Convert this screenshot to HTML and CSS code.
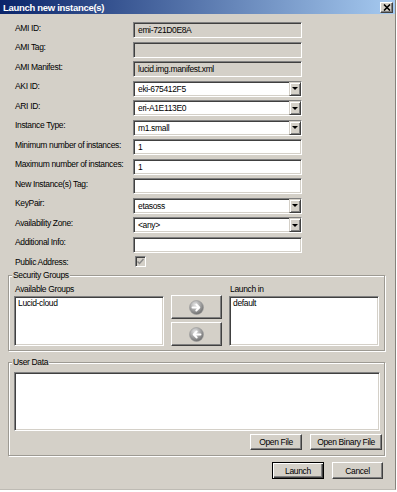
FILE: index.html
```html
<!DOCTYPE html>
<html lang="en">
<head>
    <meta charset="UTF-8">
    <title>Launch new instance(s)</title>
    <link rel="stylesheet" href="styles.css">
</head>
<body>
<div class="window">
    <div class="titlebar">
        <span class="title">Launch new instance(s)</span>
        <div class="close">
            <svg width="8" height="7" viewBox="0 0 8 7"><path d="M1 0.5l6 6M7 0.5l-6 6" stroke="#000" stroke-width="1.6"/></svg>
        </div>
    </div>

    <!-- instance settings -->
    <div class="form">
        <div class="label">AMI ID:</div>
        <div class="field disabled">emi-721D0E8A</div>

        <div class="label">AMI Tag:</div>
        <div class="field disabled"></div>

        <div class="label">AMI Manifest:</div>
        <div class="field disabled">lucid.img.manifest.xml</div>

        <div class="label">AKI ID:</div>
        <div class="field select"><span class="value">eki-675412F5</span><span class="drop"><i></i></span></div>

        <div class="label">ARI ID:</div>
        <div class="field select"><span class="value">eri-A1E113E0</span><span class="drop"><i></i></span></div>

        <div class="label">Instance Type:</div>
        <div class="field select"><span class="value">m1.small</span><span class="drop"><i></i></span></div>

        <div class="label">Minimum number of instances:</div>
        <div class="field">1</div>

        <div class="label">Maximum number of instances:</div>
        <div class="field">1</div>

        <div class="label">New Instance(s) Tag:</div>
        <div class="field"></div>

        <div class="label">KeyPair:</div>
        <div class="field select"><span class="value">etasoss</span><span class="drop"><i></i></span></div>

        <div class="label">Availability Zone:</div>
        <div class="field select"><span class="value">&lt;any&gt;</span><span class="drop"><i></i></span></div>

        <div class="label">Additional Info:</div>
        <div class="field"></div>

        <div class="label">Public Address:</div>
        <div class="check">
            <svg width="7" height="7" viewBox="0 0 7 7"><path d="M0.5 3.5l2 2 4-4.5" stroke="#8a8a8a" stroke-width="1.5" fill="none"/></svg>
        </div>
    </div>

    <!-- security groups -->
    <fieldset class="group security">
        <legend>Security Groups</legend>
        <div class="sg">
            <div class="sg-label">Available Groups</div>
            <div></div>
            <div class="sg-label">Launch in</div>

            <div class="list">Lucid-cloud</div>
            <div class="movers">
                <div class="btn mover">
                    <svg width="15" height="15" viewBox="0 0 15 15">
                        <defs><radialGradient id="ga" cx="40%" cy="30%" r="75%"><stop offset="0" stop-color="#e6e6e6"/><stop offset="1" stop-color="#666"/></radialGradient></defs>
                        <circle cx="7.5" cy="7.5" r="7" fill="url(#ga)" stroke="#9a9a9a" stroke-width="0.6"/>
                        <path d="M3.5 7.5h6.5M7.3 4.5l3 3-3 3" stroke="#fff" stroke-width="1.9" fill="none" stroke-linecap="round" stroke-linejoin="round"/>
                    </svg>
                </div>
                <div class="btn mover">
                    <svg width="15" height="15" viewBox="0 0 15 15">
                        <defs><radialGradient id="gb" cx="40%" cy="30%" r="75%"><stop offset="0" stop-color="#e6e6e6"/><stop offset="1" stop-color="#666"/></radialGradient></defs>
                        <circle cx="7.5" cy="7.5" r="7" fill="url(#gb)" stroke="#9a9a9a" stroke-width="0.6"/>
                        <path d="M11.5 7.5h-6.5M7.7 4.5l-3 3 3 3" stroke="#fff" stroke-width="1.9" fill="none" stroke-linecap="round" stroke-linejoin="round"/>
                    </svg>
                </div>
            </div>
            <div class="list">default</div>
        </div>
    </fieldset>

    <!-- user data -->
    <fieldset class="group userdata">
        <legend>User Data</legend>
        <div class="textarea"></div>
        <div class="file-buttons">
            <div class="btn open-file">Open File</div>
            <div class="btn open-binary">Open Binary File</div>
        </div>
    </fieldset>

    <div class="actions">
        <div class="btn default launch">Launch</div>
        <div class="btn cancel">Cancel</div>
    </div>
</div>
</body>
</html>
```

FILE: styles.css
```css
* {
    box-sizing: border-box;
}
body {
    margin: 0;
    background: #fff;
    font-family: "Liberation Sans", Arial, sans-serif;
    font-size: 8.5px;
    letter-spacing: -0.35px;
    color: #000;
}
.window {
    width: 396px;
    height: 490px;
    background: #d4d0c8;
    border-right: 1px solid #86837c;
    border-bottom: 1px solid #bebbb4;
}
.titlebar {
    height: 14px;
    display: flex;
    align-items: center;
    justify-content: space-between;
    padding: 0 2px 0 3px;
    background: linear-gradient(to right, #0a246a, #a6caf0);
}
.title {
    color: #fff;
    font-weight: bold;
    font-size: 9.5px;
    letter-spacing: -0.3px;
}
.close {
    width: 13px;
    height: 11px;
    display: flex;
    align-items: center;
    justify-content: center;
    background: #d4d0c8;
    border: 1px solid;
    border-color: #fff #404040 #404040 #fff;
    box-shadow: inset -1px -1px #808080;
}
.form {
    display: grid;
    grid-template-columns: 118px 169px;
    grid-template-rows: repeat(12, 16px) 12px;
    row-gap: 3.5px;
    padding: 8px 0 0 15px;
}
.label {
    align-self: start;
    line-height: 10px;
    padding-top: 0.5px;
    white-space: nowrap;
}
.field {
    height: 16px;
    display: flex;
    align-items: center;
    padding-left: 4px;
    background: #fff;
    border: 1px solid;
    border-color: #808080 #fff #fff #808080;
    box-shadow: inset 1px 1px #404040, inset -1px -1px #d4d0c8;
    white-space: nowrap;
}
.field.disabled {
    background: #d4d0c8;
}
.select .value {
    flex: 1;
}
.drop {
    width: 12px;
    height: 14px;
    display: flex;
    align-items: center;
    justify-content: center;
    background: #d4d0c8;
    border: 1px solid;
    border-color: #d4d0c8 #404040 #404040 #d4d0c8;
    box-shadow: inset 1px 1px #fff, inset -1px -1px #808080;
}
.drop i {
    width: 0;
    height: 0;
    border-left: 3px solid transparent;
    border-right: 3px solid transparent;
    border-top: 3px solid #000;
}
.check {
    width: 11px;
    height: 11px;
    margin-left: 2px;
    display: flex;
    align-items: center;
    justify-content: center;
    background: #d4d0c8;
    border: 1px solid;
    border-color: #808080 #fff #fff #808080;
    box-shadow: inset 1px 1px #404040;
}
.group {
    margin: 2px 10px 0 8px;
    padding: 4px 4px 4px 5px;
    min-width: 0;
    border: 1px solid #9d9a93;
    box-shadow: inset 1px 1px #fff, 1px 1px #fff;
}
.group legend {
    margin-left: -2px;
    padding: 0 1px;
    line-height: 10px;
    background: #d4d0c8;
}
.sg {
    display: grid;
    grid-template-columns: 150px 51px 150px;
    column-gap: 7px;
    row-gap: 2px;
}
.sg-label {
    line-height: 10px;
    padding-left: 1px;
}
.list {
    height: 50px;
    padding: 1px 3px;
    line-height: 10px;
    background: #fff;
    border: 1px solid;
    border-color: #808080 #fff #fff #808080;
    box-shadow: inset 1px 1px #404040, inset -1px -1px #d4d0c8;
}
.movers {
    display: flex;
    flex-direction: column;
    gap: 3px;
    margin-top: -1px;
}
.btn {
    display: flex;
    align-items: center;
    justify-content: center;
    height: 16px;
    background: #d4d0c8;
    border: 1px solid;
    border-color: #fff #404040 #404040 #fff;
    box-shadow: inset -1px -1px #808080;
    white-space: nowrap;
}
.mover {
    height: 24px;
}
.userdata {
    margin-top: 6px;
    padding: 5px 1px 5px 5px;
}
.textarea {
    height: 59px;
    margin-right: 3px;
    background: #fff;
    border: 1px solid;
    border-color: #808080 #fff #fff #808080;
    box-shadow: inset 1px 1px #404040, inset -1px -1px #d4d0c8;
}
.file-buttons {
    display: flex;
    justify-content: flex-end;
    gap: 8px;
    margin: 3px 1px 0 0;
}
.open-file {
    width: 52px;
}
.open-binary {
    width: 72px;
}
.actions {
    display: flex;
    justify-content: flex-end;
    gap: 8px;
    margin-top: 6px;
    padding-right: 12px;
}
.launch {
    width: 52px;
    height: 17px;
}
.cancel {
    width: 51px;
    height: 17px;
}
.btn.default {
    border-color: #000;
    box-shadow: inset 1px 1px #fff, inset -1px -1px #404040, inset -2px -2px #808080;
}
```
